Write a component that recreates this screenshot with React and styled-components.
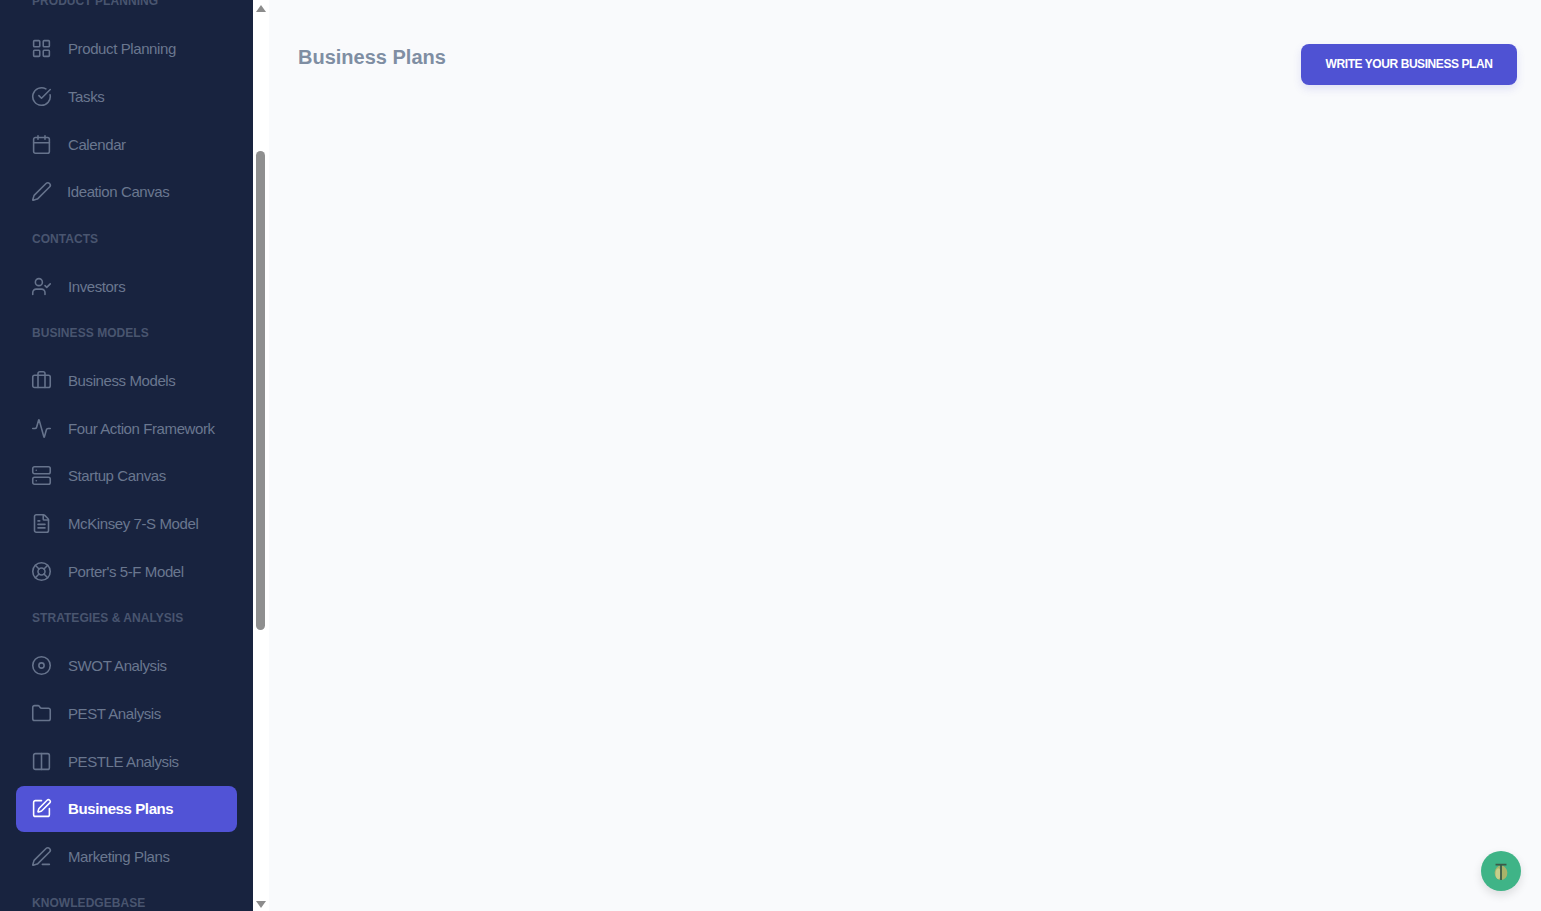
import React from "react";
import styled, { createGlobalStyle } from "styled-components";
import {
  LayoutGrid,
  CircleCheckBig,
  Calendar,
  Pen,
  UserCheck,
  Briefcase,
  Activity,
  Server,
  FileText,
  LifeBuoy,
  Folder,
  Columns2,
  SquarePen,
  PenLine,
} from "lucide-react";

const GlobalStyle = createGlobalStyle`
  html, body {
    margin: 0;
    padding: 0;
    height: 100%;
    overflow: hidden;
    background: #f9fafc;
    font-family: "Liberation Sans", Arial, sans-serif;
  }
`;

const Page = styled.div`
  display: flex;
  height: 911px;
  width: 100%;
  overflow: hidden;
`;

const Sidebar = styled.aside`
  width: 253px;
  flex: none;
  background: #18233f;
  overflow: hidden;
`;

const NavList = styled.nav`
  margin-top: -21.8px;
  display: flex;
  flex-direction: column;
`;

const SectionLabel = styled.div`
  height: 46.7px;
  box-sizing: border-box;
  padding: 15px 0 0 32px;
  font-size: 12px;
  line-height: 16px;
  font-weight: 700;
  letter-spacing: 0.05px;
  color: #49556f;
  text-transform: uppercase;
  white-space: nowrap;
`;

const NavItem = styled.a`
  height: 46px;
  margin: 0.85px 16px;
  padding-left: 15px;
  display: flex;
  align-items: center;
  gap: ${(p) => (p.$tight ? "15px" : "16px")};
  border-radius: 8px;
  font-size: 15px;
  letter-spacing: -0.4px;
  font-weight: ${(p) => (p.$active ? 700 : 400)};
  color: ${(p) => (p.$active ? "#ffffff" : "#6a778f")};
  background: ${(p) => (p.$active ? "#5153d6" : "transparent")};
  white-space: nowrap;

  svg {
    flex: none;
    color: ${(p) => (p.$active ? "#ffffff" : "#66738c")};
  }
`;

const ScrollTrack = styled.div`
  width: 16px;
  flex: none;
  background: #ffffff;
  display: flex;
  flex-direction: column;
  align-items: center;
  justify-content: space-between;
  padding: 5px 0 3px;
  box-sizing: border-box;
  position: relative;
`;

const ArrowUp = styled.span`
  width: 0;
  height: 0;
  border-left: 5px solid transparent;
  border-right: 5px solid transparent;
  border-bottom: 7px solid #8c8c8c;
`;

const ArrowDown = styled.span`
  width: 0;
  height: 0;
  border-left: 5px solid transparent;
  border-right: 5px solid transparent;
  border-top: 7px solid #8c8c8c;
`;

const ScrollThumb = styled.span`
  position: absolute;
  top: 151px;
  left: 3px;
  width: 9px;
  height: 479px;
  border-radius: 5px;
  background: #8f8f8f;
`;

const Main = styled.main`
  flex: 1;
  background: #f9fafc;
  padding: 44px 24px 0 29px;
  position: relative;
`;

const Header = styled.header`
  display: flex;
  justify-content: space-between;
  align-items: flex-start;
`;

const Title = styled.h1`
  margin: 1px 0 0;
  font-size: 20px;
  line-height: 24px;
  font-weight: 700;
  color: #7f8ea3;
`;

const WriteButton = styled.button`
  width: 216px;
  height: 41px;
  padding: 0 0 2px;
  border: none;
  border-radius: 8px;
  background: #4f52d3;
  color: #ffffff;
  font-family: inherit;
  font-size: 12px;
  font-weight: 700;
  letter-spacing: -0.43px;
  text-transform: uppercase;
  box-shadow: 0 4px 8px rgba(79, 82, 211, 0.15);
`;

const HelpBubble = styled.div`
  position: absolute;
  right: 20px;
  bottom: 20px;
  width: 40px;
  height: 40px;
  border-radius: 50%;
  background: #3fb487;
  display: flex;
  align-items: center;
  justify-content: center;
  box-shadow: 0 4px 10px rgba(0, 0, 0, 0.12);
`;

function TargetIcon({ size, strokeWidth }) {
  return (
    <svg
      width={size}
      height={size}
      viewBox="0 0 24 24"
      fill="none"
      stroke="currentColor"
      strokeWidth={strokeWidth}
    >
      <circle cx="12" cy="12" r="10" />
      <circle cx="12" cy="12" r="3" />
    </svg>
  );
}

const sections = [
  {
    title: "Product Planning",
    items: [
      { label: "Product Planning", icon: LayoutGrid },
      { label: "Tasks", icon: CircleCheckBig },
      { label: "Calendar", icon: Calendar },
      { label: "Ideation Canvas", icon: Pen, tight: true },
    ],
  },
  { title: "Contacts", items: [{ label: "Investors", icon: UserCheck }] },
  {
    title: "Business Models",
    items: [
      { label: "Business Models", icon: Briefcase },
      { label: "Four Action Framework", icon: Activity },
      { label: "Startup Canvas", icon: Server },
      { label: "McKinsey 7-S Model", icon: FileText },
      { label: "Porter's 5-F Model", icon: LifeBuoy },
    ],
  },
  {
    title: "Strategies & Analysis",
    items: [
      { label: "SWOT Analysis", icon: TargetIcon },
      { label: "PEST Analysis", icon: Folder },
      { label: "PESTLE Analysis", icon: Columns2 },
      { label: "Business Plans", icon: SquarePen, active: true },
      { label: "Marketing Plans", icon: PenLine },
    ],
  },
  { title: "Knowledgebase", items: [] },
];

function BugLogo() {
  return (
    <svg width="20" height="22" viewBox="0 0 22 24" fill="none">
      <ellipse cx="11" cy="14" rx="7" ry="8" fill="#a9b36a" />
      <ellipse cx="8" cy="15" rx="3" ry="6" fill="#c6cf8c" />
      <path d="M5 5h12M11 5v17" stroke="#3c5a48" strokeWidth="2" />
    </svg>
  );
}

export default function App() {
  return (
    <Page>
      <GlobalStyle />
      <Sidebar>
        <NavList>
          {sections.map((section) => (
            <React.Fragment key={section.title}>
              <SectionLabel>{section.title}</SectionLabel>
              {section.items.map((item) => (
                <NavItem key={item.label} $active={item.active} $tight={item.tight}>
                  <item.icon size={21} strokeWidth={1.8} />
                  {item.label}
                </NavItem>
              ))}
            </React.Fragment>
          ))}
        </NavList>
      </Sidebar>
      <ScrollTrack>
        <ArrowUp />
        <ScrollThumb />
        <ArrowDown />
      </ScrollTrack>
      <Main>
        <Header>
          <Title>Business Plans</Title>
          <WriteButton>Write your business plan</WriteButton>
        </Header>
        <HelpBubble>
          <BugLogo />
        </HelpBubble>
      </Main>
    </Page>
  );
}
